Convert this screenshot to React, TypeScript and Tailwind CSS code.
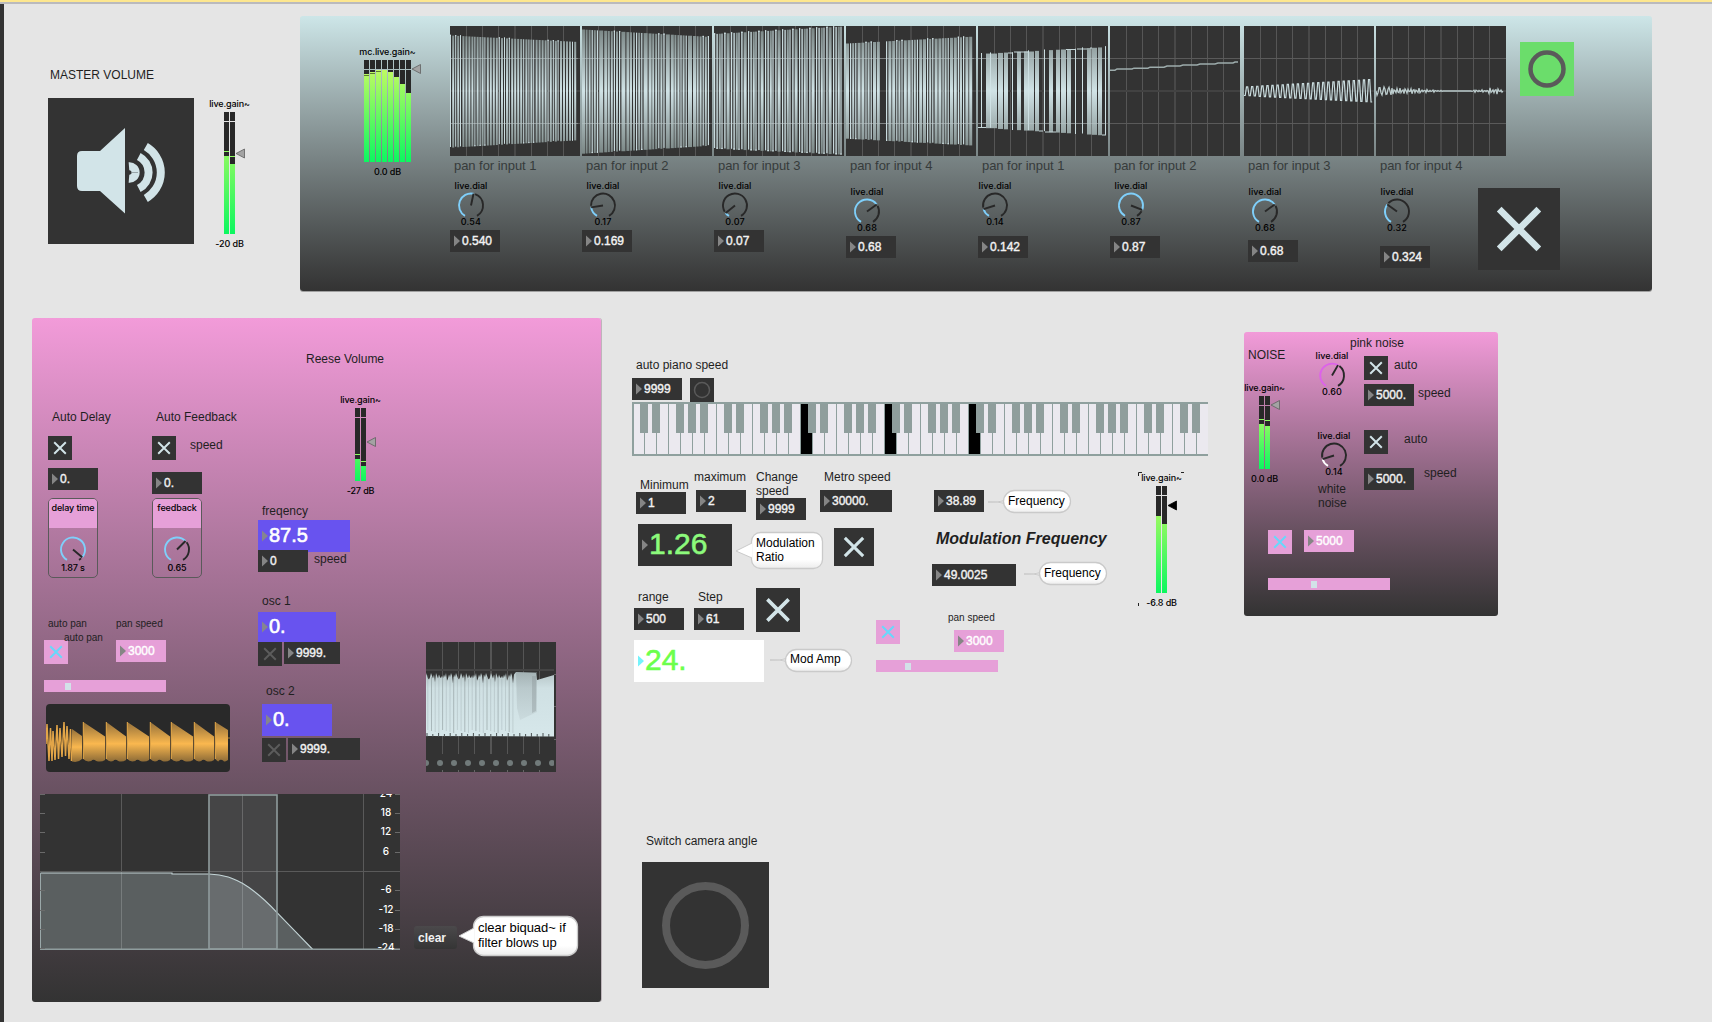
import React from "react";

const UI = "font-['Inter',sans-serif] text-[9px] leading-[11px] font-medium tracking-[-0.12px] whitespace-nowrap text-black";

/* ---------- basic patch objects ---------- */

function Label({ at, children }: { at: string; children: React.ReactNode }) {
  return <span className={`absolute whitespace-pre text-[12px] leading-[14px] text-[#1f1f1f] ${at}`}>{children}</span>;
}

function SmallLabel({ at, children }: { at: string; children: React.ReactNode }) {
  return <span className={`absolute whitespace-pre text-[10px] leading-[12px] text-[#1f1f1f] ${at}`}>{children}</span>;
}

function NumBox({ at, children }: { at: string; children: React.ReactNode }) {
  return (
    <div className={`flex h-[22px] items-center gap-[2px] bg-[#333] pl-1 text-[12px] leading-none text-[#f2f2f2] [-webkit-text-stroke:0.4px] ${at}`}>
      <svg width="6" height="12" viewBox="0 0 6 12" className="shrink-0">
        <path d="M0 0.5 L6 6 L0 11.5 Z" fill="#858585" />
      </svg>
      <span>{children}</span>
    </div>
  );
}

function BigNum({ at, tri, children }: { at: string; tri: string; children: React.ReactNode }) {
  return (
    <div className={`absolute flex items-center gap-[1px] pl-1 leading-none ${at}`}>
      <svg width="6" height="12" viewBox="0 0 6 12" className="shrink-0">
        <path d="M0 0.5 L6 6 L0 11.5 Z" fill={tri} />
      </svg>
      <span className="-mt-[2px]">{children}</span>
    </div>
  );
}

function Toggle({ at, color = "#d2e4e8" }: { at: string; color?: string }) {
  return (
    <div className={`absolute flex items-center justify-center ${at}`}>
      <svg viewBox="0 0 24 24" className="h-full w-full">
        <path d="M6.2 6.2 L17.8 17.8 M17.8 6.2 L6.2 17.8" stroke={color} strokeWidth="1.95" fill="none" />
      </svg>
    </div>
  );
}

function PinkSlider({ at, knob }: { at: string; knob: string }) {
  return (
    <div className={`absolute flex h-3 w-[122px] items-center bg-[#e6a0d8] ${at}`}>
      <div className={`h-[7px] w-[6px] bg-[#d2e2e8] ${knob}`} />
    </div>
  );
}

function arc(cx: number, cy: number, r: number, a0: number, a1: number) {
  const p = (a: number) => {
    const t = (a * Math.PI) / 180;
    return `${(cx + r * Math.sin(t)).toFixed(2)} ${(cy - r * Math.cos(t)).toFixed(2)}`;
  };
  return `M${p(a0)} A${r} ${r} 0 ${a1 - a0 > 180 ? 1 : 0} 1 ${p(a1)}`;
}

function Knob({ value, color = "#7fcffa" }: { value: number; color?: string }) {
  const a = -150 + 300 * value;
  const t = (a * Math.PI) / 180;
  const cx = 14;
  const cy = 14.5;
  return (
    <svg width="28" height="25" viewBox="0 0 28 25" className="block overflow-visible" fill="none">
      {a + 8 < 150 && <path d={arc(cx, cy, 12, a + 8, 150)} stroke="#282828" strokeWidth="1.9" />}
      <path d={arc(cx, cy, 12, -150, a)} stroke={color} strokeWidth="1.9" />
      <path d={`M${cx} ${cy} L${cx + 12 * Math.sin(t)} ${cy - 12 * Math.cos(t)}`} stroke="#282828" strokeWidth="1.9" />
    </svg>
  );
}

function Dial({ at, value, text, color }: { at: string; value: number; text: string; color?: string }) {
  return (
    <div className={`flex w-10 flex-col items-center ${UI} ${at}`}>
      <span className="tracking-normal">live.dial</span>
      <Knob value={value} color={color} />
      <span className="tracking-[0.15px]">{text}</span>
    </div>
  );
}

function PanelDial({ at, title, value, text }: { at: string; title: string; value: number; text: string }) {
  return (
    <div className={`absolute flex h-20 w-[50px] flex-col items-center overflow-hidden rounded-[5px] border border-[#5a5a5a] ${UI} ${at}`}>
      <div className="flex h-[29px] w-full justify-center bg-[#e6a0d8] pt-[3px]">{title}</div>
      <div className="mt-[7px]">
        <Knob value={value} />
      </div>
      <span className="mt-[2px]">{text}</span>
    </div>
  );
}

let gid = 0;
function Gain({ at, title, text, h, levels, peaks = [], handle, dark }: {
  at: string; title: string; text: string; h: number; levels: number[]; peaks?: number[]; handle: number; dark?: boolean;
}) {
  const [id] = React.useState(() => `gain${gid++}`);
  const w = levels.length * 6 - 1;
  return (
    <div className={`absolute flex w-[59px] flex-col items-center ${UI} ${at}`}>
      <span className="-mt-px mb-[3px]">{title}</span>
      <svg width={w} height={h} viewBox={`0 0 ${w} ${h}`} className="block overflow-visible" shapeRendering="crispEdges">
        <defs>
          <linearGradient id={id} gradientUnits="userSpaceOnUse" x1="0" y1="9" x2="0" y2={h}>
            <stop offset="0" stopColor="#c0fa62" />
            <stop offset="1" stopColor="#0cf760" />
          </linearGradient>
        </defs>
        {levels.map((l, i) => (
          <g key={i}>
            <rect x={i * 6} y="0" width="5" height="9" fill="#282828" />
            <rect x={i * 6} y="10" width="5" height={h - 10} fill="#282828" />
            <rect x={i * 6} y={l} width="5" height={h - l} fill={`url(#${id})`} />
            {peaks[i] ? <rect x={i * 6} y={peaks[i]} width="5" height="1" fill={peaks[i] > l ? "#5d7a33" : "#8dfb60"} /> : null}
          </g>
        ))}
        <path
          shapeRendering="auto"
          d={`M${w + 1} ${handle} L${w + 9.5} ${handle - 4.5} V${handle + 4.5} Z`}
          fill={dark ? "#000" : "#a3a3a3"}
          stroke={dark ? "#000" : "#5f5f5f"}
          strokeWidth="0.8"
        />
      </svg>
      <span className="mt-1">{text}</span>
    </div>
  );
}

/* ---------- oscilloscopes ---------- */

type Bar = [number, number, boolean];

const scopeGrid = (
  <g shapeRendering="crispEdges">
    {[16, 32, 48, 64, 81, 97, 113].map((x) => (
      <rect key={x} x={x} y="0" width={x === 64 ? 2 : 1} height="130" fill={x === 64 ? "#484848" : "#565656"} />
    ))}
    <rect x="0" y="32" width="130" height="1" fill="#5a5a5a" />
    <rect x="0" y="64" width="130" height="2" fill="#424242" />
    <rect x="0" y="97" width="130" height="1" fill="#5a5a5a" />
  </g>
);

function Scope({ children }: { children: React.ReactNode }) {
  return (
    <svg width="130" height="130" viewBox="0 0 130 130" className="block shrink-0 bg-[#333]">
      <defs>
        <linearGradient id="wave" gradientUnits="userSpaceOnUse" x1="0" y1="4" x2="0" y2="126">
          <stop offset="0" stopColor="#7c8887" />
          <stop offset="0.5" stopColor="#d0e3e6" />
          <stop offset="1" stopColor="#7c8887" />
        </linearGradient>
        <linearGradient id="waveBright" gradientUnits="userSpaceOnUse" x1="0" y1="4" x2="0" y2="126">
          <stop offset="0" stopColor="#c3d5d8" />
          <stop offset="0.5" stopColor="#d2e5e8" />
          <stop offset="1" stopColor="#c3d5d8" />
        </linearGradient>
      </defs>
      {scopeGrid}
      {children}
    </svg>
  );
}

function Bars({ bars, env }: { bars: Bar[]; env: [number, number, number, number] }) {
  const [t0, t1, b0, b1] = env;
  return (
    <g>
      {bars.map(([x, w, bright], i) => {
        const k = x / 128;
        const up = bright && i % 2 === 0;
        const t = t0 + (t1 - t0) * k - (up ? 0.7 : 0);
        const b = b0 + (b1 - b0) * k + (up ? 0 : 0.7);
        return (
          <g key={i}>
            <rect x={x} y={t} width={w} height={b - t} fill={bright ? "url(#waveBright)" : "url(#wave)"} />
            {bright && <rect x={x} y={up ? t : b - 1.2} width={w} height="1.2" fill="#d2e4e7" />}
          </g>
        );
      })}
      <path d="M0 32.5 H128 M0 97.5 H128" stroke="#c5d2d3" strokeOpacity="0.35" />
    </g>
  );
}

function comb(pattern: [number, number, number][], skip?: [number, number]): Bar[] {
  const out: Bar[] = [];
  let x = 0;
  let i = 0;
  while (x < 127) {
    const [w, gapW, bright] = pattern[i % pattern.length];
    if (!(skip && x >= skip[0] && x < skip[1])) out.push([x, Math.min(w, 128 - x), bright === 1]);
    x += w + gapW;
    i++;
  }
  return out;
}

const comb1 = comb([[1, 1.2, 1], [2, 1, 0], [1, 1, 1], [2, 0.8, 0], [1, 1.4, 1], [2, 1, 0], [2, 1, 0], [2, 1, 0], [2, 1, 0]]);
const comb2 = comb([[3, 0.6, 0], [2, 1, 0], [2, 1, 0], [1.2, 1, 1], [2, 1, 0], [1.2, 1.2, 1], [4, 1, 0]]);
const comb3 = comb([[1.2, 1.2, 1], [1.4, 1, 1], [2, 0.6, 0], [1.2, 1.6, 1], [1.4, 1, 1], [3, 1.4, 0]]);
const comb4 = comb([[3, 1, 0], [1.2, 1, 1], [2, 1, 0], [1.2, 1.2, 1], [3, 0.8, 0]], [32, 38]);

const scope5: Bar[] = [
  [3, 1, true], [8, 11, false], [12, 1, true], [20, 5, false], [26, 4, false], [34, 1, true], [39, 4, false], [46, 10, false], [50, 1, true],
  [57, 4, false], [66, 1, true], [71, 4, false], [78, 4, false], [83, 5, false], [89, 4, false], [97, 1, true], [104, 1, true],
  [109, 4.5, false], [114, 5, false], [120, 4, false], [127, 1, true],
];

function rampWave() {
  let d = "M0 70";
  for (let i = 0; i <= 50; i++) {
    const x = i * 2.54;
    const g = x / 127;
    const top = 61 - 7.5 * g;
    const bot = 69.5 + 6.5 * g;
    d += i % 2 ? ` L${x.toFixed(1)} ${top} L${(x + 1.2).toFixed(1)} ${top}` : ` L${x.toFixed(1)} ${bot} L${(x + 1.2).toFixed(1)} ${bot}`;
  }
  return d;
}

function noiseWave() {
  let d = "M0 65";
  for (let i = 0; i <= 127; i += 1) {
    let a = i < 45 ? 4.4 - i * 0.035 : i < 69 ? 2 * (1 - (i - 45) / 30) : i < 96 ? 0 : i < 112 ? 1.3 : 3.2;
    if (i > 122) a *= 0.6;
    const s = i < 16 ? Math.sin(i * 1.35) : Math.sin(i * 2.3) * (0.7 + 0.3 * Math.sin(i * 0.9));
    d += ` L${i} ${(65 + a * s).toFixed(1)}`;
  }
  return d;
}

const channels: { gap: string; name: string; wave: React.ReactNode; dial: string; value: number; dialText: string; num: string; numText: string }[] = [
  { gap: "", name: "pan for input 1", wave: <Bars bars={comb1} env={[9.5, 16, 121, 113.5]} />, dial: "mt-[7px] ml-px", value: 0.54, dialText: "0.54", num: "mt-[3px]", numText: "0.540" },
  { gap: "ml-[2px]", name: "pan for input 2", wave: <Bars bars={comb2} env={[3.5, 11, 127, 119]} />, dial: "mt-[7px] ml-px", value: 0.17, dialText: "0.17", num: "mt-[3px]", numText: "0.169" },
  { gap: "ml-[2px]", name: "pan for input 3", wave: <Bars bars={comb3} env={[8, 0.5, 122, 128]} />, dial: "mt-[7px] ml-px", value: 0.07, dialText: "0.07", num: "mt-[3px]", numText: "0.07" },
  { gap: "ml-[2px]", name: "pan for input 4", wave: <Bars bars={comb4} env={[17.5, 10.5, 112, 119]} />, dial: "mt-[13px] ml-px", value: 0.68, dialText: "0.68", num: "mt-[3px]", numText: "0.68" },
  {
    gap: "ml-[2px]", name: "pan for input 1",
    wave: (
      <g>
        <Bars bars={scope5} env={[28, 21, 101, 109]} />
        <path d="M0 101.5 H8 M30 27 H34 M36 26 H50 M61 105 H65 M67 106 H78 M88 23.5 H97 M99 23 H109 M112 22 H114 M124 109 H128" stroke="#c4d5d7" fill="none" />
      </g>
    ),
    dial: "mt-[7px] -ml-[3px]", value: 0.14, dialText: "0.14", num: "mt-[9px]", numText: "0.142",
  },
  {
    gap: "ml-[2px]", name: "pan for input 2",
    wave: <path d="M0 44.2 H5 L7 43 H22 L24 42.2 H38 L40 41.2 H54 L57 40 H70 L73 39 H87 L90 38 H105 L108 37 H123 L125 36 H128" stroke="#9dacac" strokeWidth="1.4" fill="none" />,
    dial: "mt-[7px] ml-px", value: 0.87, dialText: "0.87", num: "mt-[9px]", numText: "0.87",
  },
  { gap: "ml-1", name: "pan for input 3", wave: <path d={rampWave()} stroke="#c9dbdd" strokeWidth="1.2" fill="none" />, dial: "mt-[13px] ml-px", value: 0.68, dialText: "0.68", num: "mt-[7px] ml-1", numText: "0.68" },
  { gap: "ml-[2px]", name: "pan for input 4", wave: <path d={noiseWave()} stroke="#bccccd" strokeWidth="1.3" fill="none" />, dial: "mt-[13px] ml-px", value: 0.32, dialText: "0.32", num: "mt-[13px] ml-1", numText: "0.324" },
];

function ChannelStrip() {
  return (
    <div className="absolute top-[26px] left-[450px] flex">
      {channels.map((c, i) => (
        <div key={i} className={`flex w-[130px] flex-col items-start ${c.gap}`}>
          <Scope>{c.wave}</Scope>
          <span className="mt-[2px] ml-1 text-[13px] leading-[15px] tracking-[-0.05px] text-[#363b3b]">{c.name}</span>
          <Dial at={c.dial} value={c.value} text={c.dialText} />
          <NumBox at={`w-[50px] ${c.num}`}>{c.numText}</NumBox>
        </div>
      ))}
    </div>
  );
}

/* ---------- larger displays ---------- */

function Speaker() {
  return (
    <svg className="absolute top-[98px] left-[48px] bg-[#333]" width="146" height="146" viewBox="48 98 146 146" fill="none">
      <path d="M82 151 H100 L125 128 V213.5 L100 191 H82 Q77 191 77 186 V156 Q77 151 82 151 Z" fill="#d2e4e8" />
      <path d={arc(130.8, 172.5, 30, 30, 150)} stroke="#d2e4e8" strokeWidth="8" />
      <path d={arc(130.6, 172.5, 18, 27, 153)} stroke="#d2e4e8" strokeWidth="8" />
      <path d={arc(129.5, 172.5, 6.2, -5, 185)} stroke="#d2e4e8" strokeWidth="8" />
      <path d="M131 172.5 H138" stroke="#7f8a8c" strokeWidth="0.7" />
    </svg>
  );
}

const teeth = [37.3, 60.3, 81.3, 104.3, 125.3, 148.3, 169.3];

function SawDisplay() {
  return (
    <svg className="absolute top-[704px] left-[46px] rounded-[4px] bg-[#292929]" width="184" height="68" viewBox="0 0 184 68">
      <defs>
        <linearGradient id="saw" x1="0" y1="0" x2="0" y2="1">
          <stop offset="0" stopColor="#94703a" />
          <stop offset="0.55" stopColor="#fab84f" />
          <stop offset="1" stopColor="#8d6b37" />
        </linearGradient>
      </defs>
      <path
        d="M0 40 L1 20 L3 57 L4.5 24 L6 57 L7 27 L9 56 L11 21 L12.5 55 L14 24 L16 53 L18 18 L19.5 52 L21 22 L23 55 L24.5 25 L25.5 57"
        stroke="#e2a548" strokeWidth="1.5" fill="none"
      />
      <path d="M26 25 L36 32 V55 Q32 59 26 57.5 Z" fill="url(#saw)" />
      {teeth.map((x, i) => {
        const e = i === 6 ? 182 : teeth[i + 1] - 1.2;
        const yEnd = i === 6 ? 26 : 32.5;
        const m = (x + e) / 2;
        return (
          <path key={i} d={`M${x} 18 L${e} ${yEnd} V56 Q${e - 4} 58.5 ${m + 2} 57 Q${m - 1} 54.5 ${m - 3} 57 Q${x + 3} 58.5 ${x} 55 Z`} fill="url(#saw)" />
        );
      })}
      {teeth.map((x) => (
        <path key={x} d={`M${x} 18 V55`} stroke="#e8aa49" strokeWidth="1" />
      ))}
      <path d="M182 34 H184" stroke="#a87c38" />
    </svg>
  );
}

function ReeseScope() {
  let top = "M0 94 V31";
  for (let i = 0; i <= 88; i += 1) {
    const y = 31 + ((i * 7) % 5) * 1.4 + (i % 6 === 3 ? 5 : 0);
    top += ` L${i} ${y.toFixed(1)}`;
  }
  top += " L90 30 L110 31 L111 38 L128 33 V94.5 Z";
  return (
    <svg className="absolute top-[642px] left-[426px] bg-[#333]" width="130" height="130" viewBox="0 0 130 130">
      <defs>
        <linearGradient id="rs" x1="0" y1="0" x2="0" y2="1">
          <stop offset="0" stopColor="#b4c3c5" />
          <stop offset="0.25" stopColor="#cfe0e3" />
          <stop offset="1" stopColor="#d6e7ea" />
        </linearGradient>
        <linearGradient id="rsShade" x1="0" y1="0" x2="0" y2="1">
          <stop offset="0" stopColor="#8f9c9e" />
          <stop offset="1" stopColor="#c0cfd2" />
        </linearGradient>
      </defs>
      <g shapeRendering="crispEdges">
        {[16, 32, 48, 64, 81, 97, 113].map((x) => (
          <g key={x}>
            <rect x={x} y="0" width={x === 64 ? 2 : 1} height="112" fill="#555" />
            <rect x={x} y="128" width="1" height="2" fill="#666" />
          </g>
        ))}
        <rect x="0" y="27" width="128" height="2" fill="#444" />
        <rect x="128" y="32" width="2" height="1" fill="#666" />
        <rect x="128" y="64" width="2" height="1" fill="#666" />
        <rect x="128" y="97" width="2" height="1" fill="#666" />
      </g>
      <path d={top} fill="url(#rs)" />
      {Array.from({ length: 24 }, (_, i) => (
        <path key={i} d={`M${1.8 + i * 3.7} ${33 + (i % 3) * 2} V${88 + (i % 4)}`} stroke="#8f9c9e" strokeWidth="0.7" strokeOpacity={i % 3 === 1 ? 0.9 : 0.45} />
      ))}
      {Array.from({ length: 22 }, (_, i) => (
        <path key={i} d={`M${1 + i * 5.8} 95 V${91 + (i % 2)}`} stroke="#4b5152" strokeWidth="1" />
      ))}
      <path d="M90 30 H111 V70 L94 78 L91 66 Z" fill="url(#rsShade)" fillOpacity="0.45" />
      <path d="M106 34 H110 V69 L106 71 Z" fill="#8b9798" fillOpacity="0.4" />
      {Array.from({ length: 10 }, (_, i) => (
        <circle key={i} cx={i === 0 ? 0 : i === 9 ? 126 : i * 14} cy="121" r="3" fill="#717a7a" />
      ))}
      <rect x="128" y="112" width="2" height="18" fill="#333" />
    </svg>
  );
}

const dbMarks: [string, number][] = [["24", 0], ["18", 19], ["12", 38], ["6", 58], ["-6", 96], ["-12", 116], ["-18", 135], ["-24", 154]];

function FilterGraph() {
  const curve = "M0.5 79 H132 V80 H169 C186 80.5 194 85 202.4 89.3 C212 95 224 104.5 236.8 118.3 L255.5 137.7 L272.8 155.5";
  return (
    <svg className="absolute top-[794px] left-[40px] bg-[#333]" width="360" height="156" viewBox="0 0 360 156">
      <g shapeRendering="crispEdges" fill="#5a5a5a">
        <rect x="81" y="0" width="1" height="156" />
        <rect x="202" y="0" width="1" height="156" />
        <rect x="323" y="0" width="1" height="156" />
        <rect x="0" y="77" width="360" height="1" />
      </g>
      <path d={`${curve} H0 Z`} fill="#cfe3e6" fillOpacity="0.25" />
      <rect x="169" y="0" width="68" height="156" fill="#dcdce6" fillOpacity="0.11" />
      <path d={`${curve}`} stroke="#c3d4d6" strokeWidth="1.1" fill="none" />
      <path d="M0.5 79 V155" stroke="#9aa8a9" fill="none" />
      <path d="M0 155.2 H360" stroke="#8f9d9e" strokeWidth="1.6" />
      <rect x="169" y="1" width="68" height="154" fill="none" stroke="#8f9c9d" strokeWidth="1.6" />
      {dbMarks.map(([t, y]) => (
        <g key={t}>
          <path d={`M0 ${y + 0.5} H5 M355 ${y + 0.5} H360`} stroke="#6a6a6a" />
          <text x="346" y={y + 3} textAnchor="middle" fill="#fff" fontFamily="Inter, sans-serif" fontSize="10" fontWeight="500">{t}</text>
        </g>
      ))}
    </svg>
  );
}

function Keyboard() {
  const whites = Array.from({ length: 48 }, (_, i) => i);
  const pressed = [14, 21, 28];
  return (
    <div className="absolute top-[402px] left-[632px] h-[54px] w-[576px] overflow-hidden border-y-2 border-l-2 border-[#8fa09e] bg-[#ebe9ef]">
      <svg width="574" height="50" viewBox="2 2 574 50" shapeRendering="crispEdges" className="block">
        {whites.map((i) => (
          <g key={i}>
            {pressed.includes(i) && <rect x={i * 12 + 1} y="2" width="11" height="50" fill="#000" />}
            {i > 0 && <rect x={i * 12} y="2" width="1" height="50" fill="#8fa09e" />}
          </g>
        ))}
        {whites.filter((i) => ![2, 6].includes(i % 7) && i < 47).map((i) => (
          <rect key={i} x={i * 12 + 8} y="2" width="8" height="29" fill="#8f9e9c" />
        ))}
      </svg>
    </div>
  );
}

function Bubble({ at, w, h, tip, children, r = 10 }: { at: string; w: number; h: number; tip: string; r?: number; children: React.ReactNode }) {
  return (
    <div className={`absolute ${at}`}>
      <svg width={w} height={h} viewBox={`0 0 ${w} ${h}`} className="absolute top-0 left-0 overflow-visible">
        <defs>
          <linearGradient id="bub" x1="0" y1="0" x2="0" y2="1">
            <stop offset="0.75" stopColor="#fff" />
            <stop offset="1" stopColor="#ececec" />
          </linearGradient>
        </defs>
        <rect x="0.5" y="0.5" width={w - 1} height={h - 1} rx={r} fill="url(#bub)" stroke="#cacaca" strokeWidth="1.3" />
        <path d={tip} fill="#fff" stroke="#cacaca" strokeWidth="1" />
      </svg>
      <div className="relative whitespace-pre text-black">{children}</div>
    </div>
  );
}

function Bang({ at, r, sw }: { at: string; r: number; sw: number }) {
  return (
    <div className={`absolute flex items-center justify-center ${at}`}>
      <svg width={2 * (r + sw)} height={2 * (r + sw)}>
        <circle cx={r + sw} cy={r + sw} r={r} fill="none" stroke="#5a5a5a" strokeWidth={sw} />
      </svg>
    </div>
  );
}

/* ---------- patch sections ---------- */

function MasterSection() {
  return (
    <>
      <Label at="left-[50px] top-[68px]">MASTER VOLUME</Label>
      <Speaker />
      <Gain at="left-[200px] top-[99px]" title="live.gain~" text="-20 dB" h={122} levels={[44, 52]} peaks={[39, 44]} handle={41.5} />
    </>
  );
}

function OutputPanel() {
  return (
    <>
      <div className="absolute top-[16px] left-[300px] h-[275px] w-[1352px] rounded-[3px] bg-linear-to-b from-[#cde6e8] to-[#333] shadow-[0_1px_0_#a0a0a0]" />
      <Gain at="left-[358px] top-[47px]" title="mc.live.gain~" text="0.0 dB" h={102} levels={[14, 12, 10, 10, 12, 17, 24, 33]} peaks={[15, 13, 11]} handle={9} />
      <ChannelStrip />
      <Bang at="left-[1520px] top-[42px] size-[54px] bg-[#6bdd6b]" r={16.5} sw={4.5} />
      <Toggle at="left-[1478px] top-[188px] size-[82px] bg-[#333]" />
    </>
  );
}

function ReesePanel() {
  return (
    <>
      <div className="absolute top-[318px] left-[32px] h-[683.5px] w-[569px] rounded-[3px] bg-linear-to-b from-[#f29bd9] to-[#333] shadow-[1px_0_0_#bdb5ba]" />
      <Label at="left-[306px] top-[352px]">Reese Volume</Label>
      <Gain at="left-[331px] top-[395px]" title="live.gain~" text="-27 dB" h={73} levels={[51, 58]} peaks={[46, 53]} handle={34} />
      <Label at="left-[52px] top-[410px]">Auto Delay</Label>
      <Label at="left-[156px] top-[410px]">Auto Feedback</Label>
      <Toggle at="left-[48px] top-[436px] size-6 bg-[#333]" />
      <Toggle at="left-[152px] top-[436px] size-6 bg-[#333]" />
      <Label at="left-[190px] top-[438px]">speed</Label>
      <NumBox at="absolute left-[48px] top-[468px] w-[50px]">0.</NumBox>
      <NumBox at="absolute left-[152px] top-[472px] w-[50px]">0.</NumBox>
      <PanelDial at="left-[48px] top-[498px]" title="delay time" value={0.933} text="1.87 s" />
      <PanelDial at="left-[152px] top-[498px]" title="feedback" value={0.65} text="0.65" />

      <Label at="left-[262px] top-[504px]">freqency</Label>
      <BigNum at="left-[258px] top-[520px] h-8 w-[92px] bg-[#6853ef] text-[20px] text-white [-webkit-text-stroke:0.6px]" tri="#85858f">87.5</BigNum>
      <NumBox at="absolute left-[258px] top-[550px] w-[50px]">0</NumBox>
      <Label at="left-[314px] top-[552px]">speed</Label>
      <Label at="left-[262px] top-[594px]">osc 1</Label>
      <BigNum at="left-[258px] top-[612px] h-[30px] w-[78px] bg-[#6853ef] text-[20px] text-white [-webkit-text-stroke:0.6px]" tri="#85858f">0.</BigNum>
      <Toggle at="left-[258px] top-[642px] size-6 bg-[#333]" color="#5c5c5c" />
      <NumBox at="absolute left-[284px] top-[642px] w-[56px]">9999.</NumBox>
      <Label at="left-[266px] top-[684px]">osc 2</Label>
      <BigNum at="left-[262px] top-[704px] h-8 w-[70px] bg-[#6853ef] text-[20px] text-white [-webkit-text-stroke:0.6px]" tri="#85858f">0.</BigNum>
      <Toggle at="left-[262px] top-[738px] size-6 bg-[#333]" color="#5c5c5c" />
      <NumBox at="absolute left-[288px] top-[738px] w-[72px]">9999.</NumBox>

      <Toggle at="left-[44px] top-[640px] size-6 bg-[#e6a0d8]" color="#67d8fb" />
      <SmallLabel at="left-[48px] top-[618px]">auto pan</SmallLabel>
      <SmallLabel at="left-[64px] top-[632px]">auto pan</SmallLabel>
      <SmallLabel at="left-[116px] top-[618px]">pan speed</SmallLabel>
      <NumBox at="absolute left-[116px] top-[640px] w-[50px] !bg-[#e6a0d8] !text-white">3000</NumBox>
      <PinkSlider at="left-[44px] top-[680px]" knob="ml-[21px]" />
      <SawDisplay />
      <ReeseScope />
      <FilterGraph />
      <div className="absolute top-[926px] left-[414px] flex h-[23px] w-[43px] items-center rounded-[3px] bg-linear-to-b from-[#4b494b] to-[#353535] pl-1 text-[12px] leading-none font-bold text-[#f2f2f2]">
        clear
      </div>
      <Bubble at="left-[473px] top-[916px]" w={105} h={40} tip="M1 12 L-14 20 L1 27">
        <p className="pt-1 pl-[5px] text-[13px] leading-[15px] tracking-[-0.05px]">{"clear biquad~ if\nfilter blows up"}</p>
      </Bubble>
    </>
  );
}

function PianoSection() {
  return (
    <>
      <Label at="left-[636px] top-[358px]">auto piano speed</Label>
      <NumBox at="absolute left-[632px] top-[378px] w-[50px]">9999</NumBox>
      <Bang at="left-[690px] top-[378px] size-6 bg-[#333]" r={7.5} sw={1.5} />
      <Keyboard />
      <Label at="left-[640px] top-[478px]">Minimum</Label>
      <Label at="left-[694px] top-[470px]">maximum</Label>
      <Label at="left-[756px] top-[470px]">{"Change\nspeed"}</Label>
      <Label at="left-[824px] top-[470px]">Metro speed</Label>
      <NumBox at="absolute left-[636px] top-[492px] w-[50px]">1</NumBox>
      <NumBox at="absolute left-[696px] top-[490px] w-[50px]">2</NumBox>
      <NumBox at="absolute left-[756px] top-[498px] w-[50px]">9999</NumBox>
      <NumBox at="absolute left-[820px] top-[490px] w-[72px]">30000.</NumBox>
    </>
  );
}

function ModulationSection() {
  return (
    <>
      <BigNum at="left-[638px] top-[524px] h-[42px] w-[94px] bg-[#333] text-[30px] text-[#8cfa7c] [-webkit-text-stroke:0.6px]" tri="#858585">1.26</BigNum>
      <Bubble at="left-[751px] top-[532px]" w={72} h={37} r={9} tip="M1 11 L-15 19 L1 26">
        <p className="pt-1 pl-[5px] text-[12px] leading-[14px]">{"Modulation\nRatio"}</p>
      </Bubble>
      <Toggle at="left-[834px] top-[528px] h-[38px] w-[40px] bg-[#333]" />
      <Label at="left-[638px] top-[590px]">range</Label>
      <Label at="left-[698px] top-[590px]">Step</Label>
      <NumBox at="absolute left-[634px] top-[608px] w-[50px]">500</NumBox>
      <NumBox at="absolute left-[694px] top-[608px] w-[50px]">61</NumBox>
      <Toggle at="left-[756px] top-[588px] size-[44px] bg-[#333]" />
      <BigNum at="left-[634px] top-[640px] h-[42px] w-[130px] bg-white text-[30px] text-[#6cff4c] [-webkit-text-stroke:0.6px]" tri="#74f3fc">24.</BigNum>
      <Bubble at="left-[785px] top-[649px]" w={67} h={23} r={11} tip="M1 9.5 L-5 10.8 H-15 M-15 11.2 H-5 L1 12.5">
        <p className="pt-[3px] pl-[5px] text-[12px] leading-[14px]">Mod Amp</p>
      </Bubble>

      <NumBox at="absolute left-[934px] top-[490px] w-[50px]">38.89</NumBox>
      <Bubble at="left-[1003px] top-[490px]" w={68} h={23} r={11} tip="M1 10.5 L-5 11.8 H-15 M-15 12.2 H-5 L1 13.5">
        <p className="pt-[4px] pl-[5px] text-[12px] leading-[14px]">Frequency</p>
      </Bubble>
      <span className="absolute top-[530px] left-[936px] text-[16px] leading-[18px] font-bold whitespace-pre text-[#1f1f1f] italic">Modulation Frequency</span>
      <NumBox at="absolute left-[932px] top-[564px] w-[84px]">49.0025</NumBox>
      <Bubble at="left-[1039px] top-[562px]" w={68} h={23} r={11} tip="M1 10.5 L-5 11.8 H-15 M-15 12.2 H-5 L1 13.5">
        <p className="pt-[4px] pl-[5px] text-[12px] leading-[14px]">Frequency</p>
      </Bubble>
      <Toggle at="left-[876px] top-[620px] size-6 bg-[#e6a0d8]" color="#67d8fb" />
      <SmallLabel at="left-[948px] top-[612px]">pan speed</SmallLabel>
      <NumBox at="absolute left-[954px] top-[630px] w-[50px] !bg-[#e6a0d8] !text-white">3000</NumBox>
      <PinkSlider at="left-[876px] top-[660px]" knob="ml-[29px]" />
      <Gain at="left-[1132px] top-[473px]" title="live.gain~" text="-6.8 dB" h={107} levels={[30, 38]} handle={19.5} dark />
      <svg className="absolute top-[472px] left-[1138px]" width="46" height="134" fill="none" stroke="#222">
        <path d="M0.5 4 V0.5 H4 M43 0.5 H46 M0.5 131 V134" />
      </svg>
      <Label at="left-[646px] top-[834px]">Switch camera angle</Label>
      <Bang at="left-[642px] top-[862px] h-[126px] w-[127px] bg-[#333]" r={39.5} sw={8} />
    </>
  );
}

function NoisePanel() {
  return (
    <>
      <div className="absolute top-[332px] left-[1244px] h-[284px] w-[254px] rounded-[3px] bg-linear-to-b from-[#f29bd9] to-[#333]" />
      <Label at="left-[1248px] top-[348px]">NOISE</Label>
      <Label at="left-[1350px] top-[336px]">pink noise</Label>
      <Gain at="left-[1235px] top-[383px]" title="live.gain~" text="0.0 dB" h={73} levels={[28, 30]} peaks={[23, 24]} handle={9} />
      <Dial at="absolute left-[1312px] top-[350px]" value={0.6} text="0.60" color="#dd62ea" />
      <Toggle at="left-[1364px] top-[356px] size-6 bg-[#333]" />
      <Label at="left-[1394px] top-[358px]">auto</Label>
      <NumBox at="absolute left-[1364px] top-[384px] w-[50px]">5000.</NumBox>
      <Label at="left-[1418px] top-[386px]">speed</Label>
      <Dial at="absolute left-[1314px] top-[430px]" value={0.14} text="0.14" color="#ffffff" />
      <Label at="left-[1318px] top-[482px]">{"white\nnoise"}</Label>
      <Toggle at="left-[1364px] top-[430px] size-6 bg-[#333]" />
      <Label at="left-[1404px] top-[432px]">auto</Label>
      <NumBox at="absolute left-[1364px] top-[468px] w-[50px]">5000.</NumBox>
      <Label at="left-[1424px] top-[466px]">speed</Label>
      <Toggle at="left-[1268px] top-[530px] size-6 bg-[#e6a0d8]" color="#67d8fb" />
      <NumBox at="absolute left-[1304px] top-[530px] w-[50px] !bg-[#e6a0d8] !text-white">5000</NumBox>
      <PinkSlider at="left-[1268px] top-[578px]" knob="ml-[43px]" />
    </>
  );
}

export default function App() {
  return (
    <div className="relative flex h-[1022px] w-[1712px] flex-col overflow-hidden bg-[#e5e5e5] font-['Liberation_Sans',Arial,sans-serif]">
      <div className="h-[2px] bg-[#fde78f]" />
      <div className="h-[2px] bg-[#bababd]" />
      <div className="w-1 flex-1 bg-[#333]" />
      <MasterSection />
      <OutputPanel />
      <ReesePanel />
      <PianoSection />
      <ModulationSection />
      <NoisePanel />
    </div>
  );
}
